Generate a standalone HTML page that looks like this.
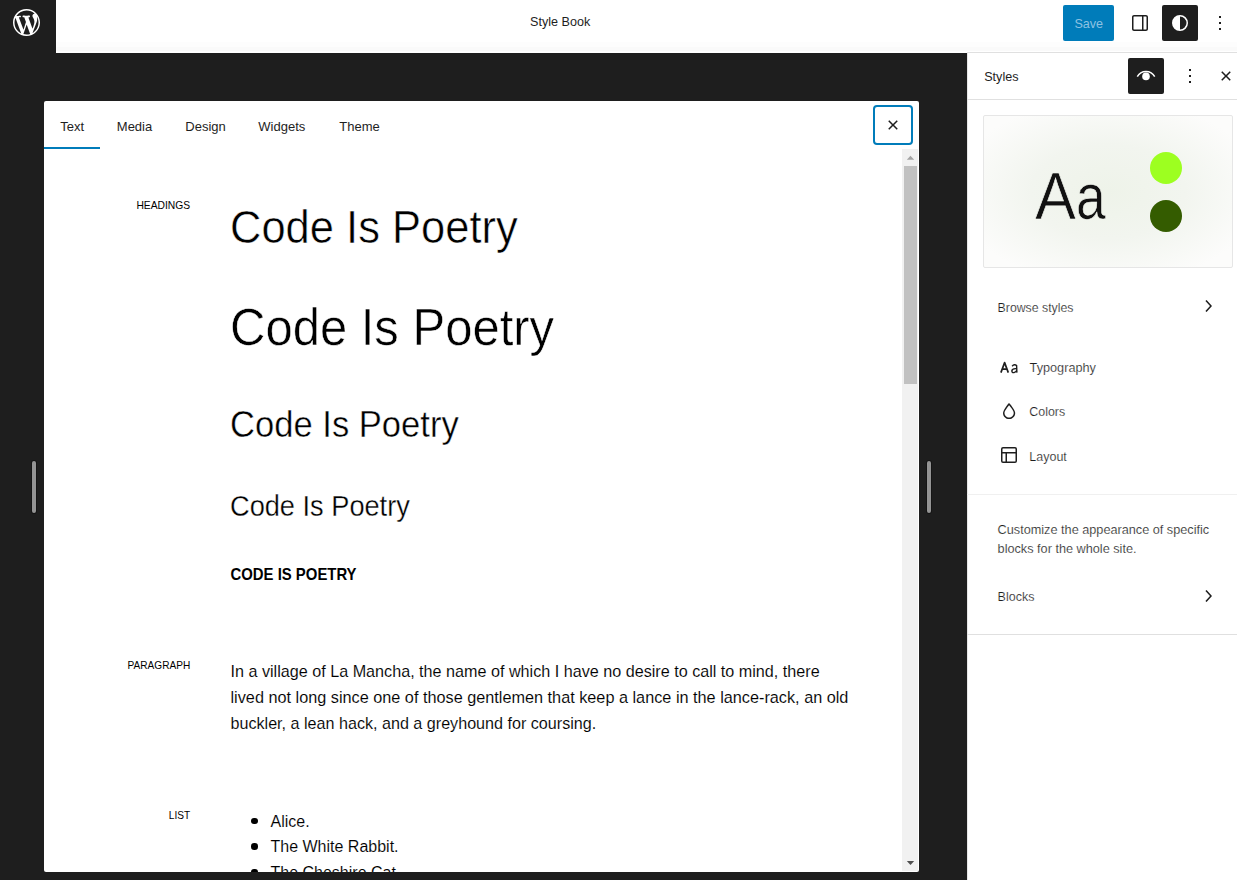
<!DOCTYPE html>
<html><head><meta charset="utf-8"><title>Style Book</title>
<style>
*{box-sizing:border-box;margin:0;padding:0}
html,body{width:1237px;height:880px;overflow:hidden;background:#1e1e1e;font-family:"Liberation Sans",sans-serif;color:#1e1e1e}
.t{position:absolute;white-space:nowrap}
.a{position:absolute}
svg{position:absolute;overflow:visible}
</style></head><body>
<div class="a" style="left:0;top:0;width:1237px;height:53px;background:#fff"></div>
<div class="a" style="left:0;top:42px;width:1237px;height:5px;background:#fdfdfd"></div>
<div class="a" style="left:0;top:47px;width:1237px;height:4px;background:#fafafa"></div>
<div class="a" style="left:0;top:0;width:56px;height:53px;background:#1e1e1e"></div>
<svg style="left:12.5px;top:9.3px" width="27" height="27" viewBox="0 0 20 20"><path fill="#fff" d="M20 10c0-5.51-4.49-10-10-10C4.48 0 0 4.49 0 10c0 5.52 4.48 10 10 10 5.51 0 10-4.48 10-10zM7.78 15.37L4.37 6.220c.55-.02 1.17-.08 1.17-.08.5-.06.44-1.13-.06-1.11 0 0-1.45.11-2.37.11-.18 0-.37 0-.58-.01C4.12 2.690 6.870 1.110 10 1.110c2.330 0 4.450.87 6.050 2.340-.68-.11-1.650.39-1.650 1.580 0 .74.45 1.360.9 2.100.35.61.55 1.360.55 2.460 0 1.490-1.400 5-1.400 5l-3.030-8.370c.54-.02.82-.17.82-.17.5-.05.44-1.250-.06-1.220 0 0-1.440.12-2.380.12-.87 0-2.330-.12-2.330-.12-.5-.03-.56 1.200-.06 1.220l.92.08 1.260 3.410zM17.410 10c.24-.64.74-1.870.43-4.250.7 1.290 1.050 2.710 1.050 4.250 0 3.290-1.730 6.240-4.400 7.780.97-2.590 1.940-5.200 2.920-7.780zM6.100 18.090C3.120 16.650 1.110 13.530 1.110 10c0-1.300.23-2.480.72-3.590C3.250 10.300 4.670 14.200 6.100 18.090zm4.030-6.630l2.580 6.980c-.86.29-1.760.45-2.710.45-.79 0-1.570-.11-2.290-.33.81-2.380 1.620-4.740 2.420-7.100z"/></svg>
<div class="t" style="left:530.00px;top:16.23px;font-size:12.6px;line-height:12.6px;color:#1e1e1e;">Style Book</div>

<div class="a" style="left:1063px;top:5px;width:51px;height:36px;background:#007cba;border-radius:2px"></div>
<div class="t" style="left:1074.40px;top:18.33px;font-size:12.6px;line-height:12.6px;color:#8dc2e2;">Save</div>

<svg style="left:1128px;top:11px" width="24" height="24" viewBox="0 0 24 24"><path fill="#1e1e1e" fill-rule="evenodd" d="M18 4H6c-1.1 0-2 .9-2 2v12c0 1.1.9 2 2 2h12c1.1 0 2-.9 2-2V6c0-1.1-.9-2-2-2zm-4 14.5H6c-.3 0-.5-.2-.5-.5V6c0-.3.2-.5.5-.5h8v13zm4.5-.5c0 .3-.2.5-.5.5h-2.5v-13H18c.3 0 .5.2.5.5v12z"/></svg>
<div class="a" style="left:1162px;top:5px;width:36px;height:36px;background:#1e1e1e;border-radius:2px"></div>
<svg style="left:1168px;top:10.8px" width="24" height="24" viewBox="0 0 24 24"><path fill="#fff" fill-rule="evenodd" d="M20 12a8 8 0 1 1-16 0 8 8 0 0 1 16 0Zm-1.5 0a6.5 6.5 0 0 1-6.5 6.5v-13a6.5 6.5 0 0 1 6.5 6.5Z"/></svg>
<svg style="left:1208px;top:10.8px" width="24" height="24" viewBox="0 0 24 24"><path fill="#1e1e1e" d="M13 19h-2v-2h2v2zm0-6h-2v-2h2v2zm0-6h-2V5h2v2z"/></svg>
<div class="a" style="left:967px;top:52px;width:270px;height:828px;background:#fff;border-top:1px solid #e0e0e0;border-left:1px solid #e6e6e6"></div>
<div class="t" style="left:984.20px;top:70.83px;font-size:12.6px;line-height:12.6px;color:#1e1e1e;">Styles</div>

<div class="a" style="left:1128px;top:58px;width:36px;height:36px;background:#1e1e1e;border-radius:2px"></div>
<svg style="left:1128px;top:58px" width="36" height="36" viewBox="0 0 36 36"><path d="M9.3 18.7 A9.8 9.8 0 0 1 26.7 18.7" fill="none" stroke="#fff" stroke-width="1.5" stroke-linecap="butt"/><circle cx="18" cy="18.4" r="3.8" fill="#fff"/></svg>
<svg style="left:1178px;top:64px" width="24" height="24" viewBox="0 0 24 24"><path fill="#1e1e1e" d="M13 19h-2v-2h2v2zm0-6h-2v-2h2v2zm0-6h-2V5h2v2z"/></svg>
<svg style="left:1214px;top:64px" width="24" height="24" viewBox="0 0 24 24"><path fill="#1e1e1e" d="M12 13.06l3.712 3.713 1.061-1.06L13.061 12l3.712-3.712-1.06-1.06L12 10.938 8.288 7.227l-1.061 1.06L10.939 12l-3.712 3.712 1.06 1.061L12 13.061z"/></svg>
<div class="a" style="left:967px;top:99px;width:270px;height:1px;background:#e0e0e0"></div>
<div class="a" style="left:983px;top:115px;width:250px;height:153px;border:1px solid #e6e6e6;border-radius:2px;background:radial-gradient(ellipse 62% 62% at 50% 50%, #eef3e9 0%, #f2f5ef 50%, #fcfcfb 100%)"></div>
<div class="t" style="left:1034.80px;top:169.60px;font-size:58px;line-height:58px;color:#111;-webkit-text-stroke:0.6px #f0f3ec;transform:scale(1.06,1.145);transform-origin:0 49.10px;">A</div>

<div class="t" style="left:1075.50px;top:170.40px;font-size:58px;line-height:58px;color:#111;-webkit-text-stroke:0.6px #f0f3ec;transform:scale(0.92,1.13);transform-origin:0 49.10px;">a</div>

<div class="a" style="left:1150px;top:152px;width:32px;height:32px;border-radius:50%;background:#9dff20"></div>
<div class="a" style="left:1150px;top:200px;width:32px;height:32px;border-radius:50%;background:#345c00"></div>
<div class="t" style="left:997.60px;top:301.79px;font-size:12.3px;line-height:12.3px;color:#1e1e1e;-webkit-text-stroke:0.18px #fff;">Browse styles</div>

<svg style="left:1195.5px;top:294px" width="24" height="24" viewBox="0 0 24 24"><path fill="#1e1e1e" d="M10.6 6L9.4 7l4.6 5-4.6 5 1.2 1 5.4-6z"/></svg>
<svg style="left:990px;top:355px" width="32" height="24" viewBox="990 355 32 24"><path d="M1000.9 372.6 L1004.6 362.6 L1008.3 372.6 M1002.3 369.1 L1006.9 369.1" fill="none" stroke="#1e1e1e" stroke-width="1.7" stroke-linejoin="round"/><path d="M1012.1 366.2 Q1014.5 363.6 1016.6 365.6 L1016.9 372.6 M1016.7 368.7 Q1012.2 368.3 1011.8 370.8 Q1012.0 373.0 1014.0 372.6 Q1016.0 372.0 1016.7 370.5" fill="none" stroke="#1e1e1e" stroke-width="1.4"/></svg>
<div class="t" style="left:1029.60px;top:361.95px;font-size:12.7px;line-height:12.7px;color:#1e1e1e;-webkit-text-stroke:0.18px #fff;">Typography</div>

<svg style="left:996.9px;top:399.2px" width="24" height="24" viewBox="0 0 24 24"><path fill="#1e1e1e" d="M17.2 10.9c-.5-1-1.2-2.1-2.1-3.2-.6-.9-1.3-1.7-2.1-2.6L12 4l-1 1.1c-.6.9-1.3 1.7-2 2.6-.8 1.2-1.5 2.3-2 3.2-.6 1.2-1 2.2-1 3 0 3.4 2.7 6.1 6.1 6.1s6.1-2.700 6.1-6.100c0-.8-.3-1.800-1-3zm-5.1 7.6c-2.5 0-4.6-2.1-4.6-4.6 0-.3.1-1 .8-2.3.5-.9 1.1-1.9 2-3.1.7-.9 1.3-1.7 1.8-2.3.7.8 1.3 1.6 1.8 2.3.8 1.1 1.5 2.2 2 3.1.7 1.3.8 2 .8 2.3 0 2.5-2.1 4.6-4.6 4.6z"/></svg>
<div class="t" style="left:1029.30px;top:405.50px;font-size:12.4px;line-height:12.4px;color:#1e1e1e;-webkit-text-stroke:0.18px #fff;">Colors</div>

<svg style="left:997.2px;top:443.1px" width="24" height="24" viewBox="0 0 24 24"><path fill="#1e1e1e" d="M18 5.5H6a.5.5 0 00-.5.5v3h13V6a.5.5 0 00-.5-.5zm.5 5H10v8h8a.5.5 0 00.5-.5v-7.5zm-10 0h-3V18a.5.5 0 00.5.5h2.5v-8zM6 4h12a2 2 0 012 2v12a2 2 0 01-2 2H6a2 2 0 01-2-2V6a2 2 0 012-2z"/></svg>
<div class="t" style="left:1029.30px;top:450.62px;font-size:12.5px;line-height:12.5px;color:#1e1e1e;-webkit-text-stroke:0.18px #fff;">Layout</div>

<div class="a" style="left:967px;top:494px;width:270px;height:1px;background:#f0f0f0"></div>
<div class="t" style="left:997.60px;top:523.95px;font-size:12.7px;line-height:12.7px;color:#1e1e1e;-webkit-text-stroke:0.18px #fff;">Customize the appearance of specific</div>

<div class="t" style="left:997.60px;top:542.85px;font-size:12.7px;line-height:12.7px;color:#1e1e1e;-webkit-text-stroke:0.18px #fff;">blocks for the whole site.</div>

<div class="t" style="left:997.60px;top:590.62px;font-size:12.5px;line-height:12.5px;color:#1e1e1e;-webkit-text-stroke:0.18px #fff;">Blocks</div>

<svg style="left:1195.5px;top:584px" width="24" height="24" viewBox="0 0 24 24"><path fill="#1e1e1e" d="M10.6 6L9.4 7l4.6 5-4.6 5 1.2 1 5.4-6z"/></svg>
<div class="a" style="left:967px;top:634px;width:270px;height:1px;background:#e0e0e0"></div>
<div class="a" style="left:44px;top:101px;width:875px;height:771px;background:#fff;border-radius:2px"></div>
<div class="t" style="left:60.30px;top:120.10px;font-size:13px;line-height:13px;color:#1e1e1e;">Text</div>

<div class="t" style="left:116.80px;top:120.10px;font-size:13px;line-height:13px;color:#1e1e1e;">Media</div>

<div class="t" style="left:185.30px;top:120.10px;font-size:13px;line-height:13px;color:#1e1e1e;">Design</div>

<div class="t" style="left:258.30px;top:120.10px;font-size:13px;line-height:13px;color:#1e1e1e;">Widgets</div>

<div class="t" style="left:339.30px;top:120.10px;font-size:13px;line-height:13px;color:#1e1e1e;">Theme</div>

<div class="a" style="left:44px;top:147px;width:56px;height:2px;background:#007cba"></div>
<div class="a" style="left:873px;top:105px;width:40px;height:40px;border:2px solid #007cba;border-radius:4px"></div>
<svg style="left:881px;top:113px" width="24" height="24" viewBox="0 0 24 24"><path fill="#1e1e1e" d="M12 13.06l3.712 3.713 1.061-1.06L13.061 12l3.712-3.712-1.06-1.06L12 10.938 8.288 7.227l-1.061 1.06L10.939 12l-3.712 3.712 1.06 1.061L12 13.061z"/></svg>
<div class="a" style="left:902px;top:149px;width:16px;height:722px;background:#f1f1f1"></div>
<div class="a" style="left:904px;top:166px;width:13px;height:218px;background:#c1c1c1"></div>
<svg style="left:902px;top:149px" width="16" height="16" viewBox="0 0 16 16"><path d="M4.8 10.8 L8.5 6.8 L12.2 10.8Z" fill="#a3a3a3"/></svg>
<svg style="left:902px;top:855px" width="16" height="16" viewBox="0 0 16 16"><path d="M4.8 6 L8.5 10 L12.2 6Z" fill="#505050"/></svg>
<div class="t" style="left:40.20px;width:150px;text-align:right;top:201.28px;font-size:10.3px;line-height:10.3px;color:#000;transform:scale(1.0,1.12);transform-origin:100% 8.72px;">HEADINGS</div>

<div class="t" style="left:40.20px;width:150px;text-align:right;top:661.45px;font-size:10.1px;line-height:10.1px;color:#000;transform:scale(1.0,1.12);transform-origin:100% 8.55px;">PARAGRAPH</div>

<div class="t" style="left:40.20px;width:150px;text-align:right;top:811.45px;font-size:10.1px;line-height:10.1px;color:#000;transform:scale(1.0,1.12);transform-origin:100% 8.55px;">LIST</div>

<div class="t" style="left:230.00px;top:206.68px;font-size:43.5px;line-height:43.5px;color:#000;-webkit-text-stroke:0.5px #fff;transform:scale(1.0,1.05);transform-origin:0 36.82px;">Code Is Poetry</div>

<div class="t" style="left:230.00px;top:303.52px;font-size:49.0px;line-height:49.0px;color:#000;-webkit-text-stroke:0.5px #fff;transform:scale(1.0,1.07);transform-origin:0 41.48px;">Code Is Poetry</div>

<div class="t" style="left:230.00px;top:408.01px;font-size:34.6px;line-height:34.6px;color:#000;-webkit-text-stroke:0.4px #fff;transform:scale(1.0,1.07);transform-origin:0 29.29px;">Code Is Poetry</div>

<div class="t" style="left:230.00px;top:492.78px;font-size:27.2px;line-height:27.2px;color:#000;-webkit-text-stroke:0.3px #fff;transform:scale(1.0,1.07);transform-origin:0 23.02px;">Code Is Poetry</div>

<div class="t" style="left:230.50px;top:567.79px;font-size:14.9px;line-height:14.9px;color:#000;font-weight:700;transform:scale(1.0,1.08);transform-origin:0 12.61px;">CODE IS POETRY</div>

<div class="t" style="left:230.50px;top:663.21px;font-size:16.17px;line-height:16.17px;color:#000;-webkit-text-stroke:0.1px #fff;">In a village of La Mancha, the name of which I have no desire to call to mind, there</div>

<div class="t" style="left:230.50px;top:688.94px;font-size:16.26px;line-height:16.26px;color:#000;-webkit-text-stroke:0.1px #fff;">lived not long since one of those gentlemen that keep a lance in the lance-rack, an old</div>

<div class="t" style="left:230.50px;top:714.94px;font-size:16.14px;line-height:16.14px;color:#000;-webkit-text-stroke:0.1px #fff;">buckler, a lean hack, and a greyhound for coursing.</div>

<div class="a" style="left:251px;top:817.8px;width:6.5px;height:6.5px;border-radius:50%;background:#000"></div>
<div class="t" style="left:270.50px;top:813.56px;font-size:16px;line-height:16px;color:#000;-webkit-text-stroke:0.1px #fff;">Alice.</div>

<div class="a" style="left:251px;top:843.3px;width:6.5px;height:6.5px;border-radius:50%;background:#000"></div>
<div class="t" style="left:270.50px;top:839.06px;font-size:16px;line-height:16px;color:#000;-webkit-text-stroke:0.1px #fff;">The White Rabbit.</div>

<div class="a" style="left:251px;top:868.8px;width:6.5px;height:6.5px;border-radius:50%;background:#000"></div>
<div class="t" style="left:270.50px;top:864.56px;font-size:16px;line-height:16px;color:#000;-webkit-text-stroke:0.1px #fff;">The Cheshire Cat.</div>

<div class="a" style="left:0;top:872px;width:967px;height:8px;background:#1e1e1e"></div>
<div class="a" style="left:32px;top:461px;width:4px;height:52px;border-radius:2px;background:#949494;box-shadow:0 0 0 1px #151515"></div>
<div class="a" style="left:927px;top:461px;width:4px;height:52px;border-radius:2px;background:#949494;box-shadow:0 0 0 1px #151515"></div>
</body></html>
